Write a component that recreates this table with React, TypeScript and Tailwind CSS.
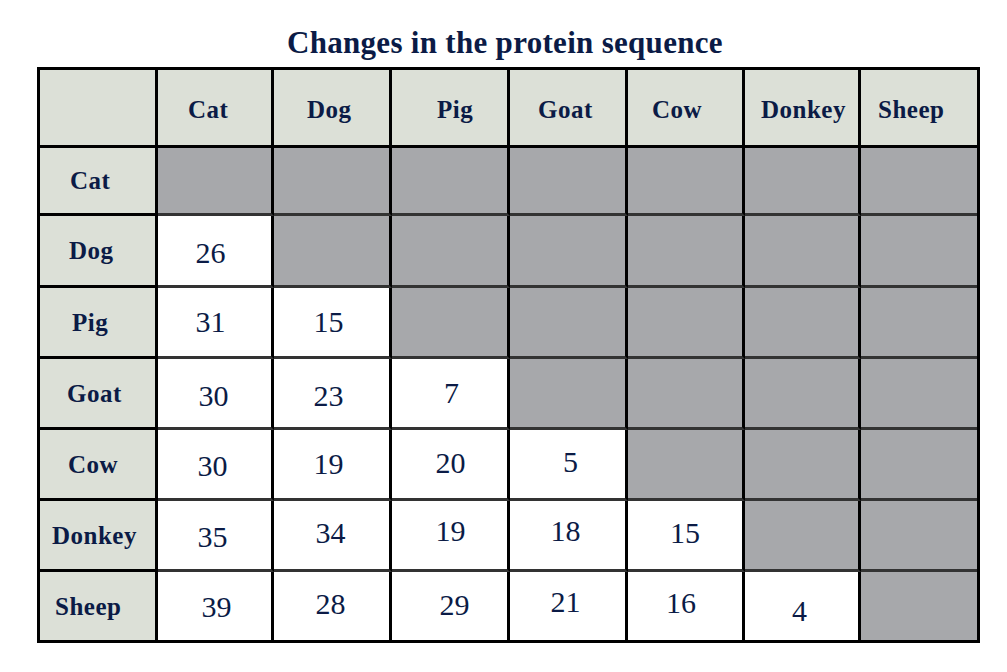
import React from "react";

const serif = { fontFamily: '"Liberation Serif", "Times New Roman", serif' };

const headers: { name: string; pl: string }[] = [
  { name: "Cat", pl: "pl-[30px]" },
  { name: "Dog", pl: "pl-[33px]" },
  { name: "Pig", pl: "pl-[45px]" },
  { name: "Goat", pl: "pl-[28px]" },
  { name: "Cow", pl: "pl-[24px]" },
  { name: "Donkey", pl: "pl-[16px]" },
  { name: "Sheep", pl: "pl-[17px]" },
];

type Cell = { v: string; t: string } | null;

const rows: { name: string; pl: string; h: string; cells: Cell[] }[] = [
  { name: "Cat", pl: "pl-[30px]", h: "h-[68px]", cells: [] },
  {
    name: "Dog",
    pl: "pl-[29px]",
    h: "h-[72px]",
    cells: [{ v: "26", t: "translate-x-[-4px] translate-y-[2px]" }],
  },
  {
    name: "Pig",
    pl: "pl-[32px]",
    h: "h-[71px]",
    cells: [
      { v: "31", t: "translate-x-[-4px] translate-y-[0px]" },
      { v: "15", t: "translate-x-[-3px] translate-y-[0px]" },
    ],
  },
  {
    name: "Goat",
    pl: "pl-[27px]",
    h: "h-[71px]",
    cells: [
      { v: "30", t: "translate-x-[-1px] translate-y-[3px]" },
      { v: "23", t: "translate-x-[-3px] translate-y-[3px]" },
      { v: "7", t: "translate-x-[2px] translate-y-[0px]" },
    ],
  },
  {
    name: "Cow",
    pl: "pl-[28px]",
    h: "h-[71px]",
    cells: [
      { v: "30", t: "translate-x-[-2px] translate-y-[2px]" },
      { v: "19", t: "translate-x-[-3px] translate-y-[0px]" },
      { v: "20", t: "translate-x-[1px] translate-y-[-1px]" },
      { v: "5", t: "translate-x-[3px] translate-y-[-2px]" },
    ],
  },
  {
    name: "Donkey",
    pl: "pl-[12px]",
    h: "h-[71px]",
    cells: [
      { v: "35", t: "translate-x-[-2px] translate-y-[2px]" },
      { v: "34", t: "translate-x-[-1px] translate-y-[-2px]" },
      { v: "19", t: "translate-x-[1px] translate-y-[-4px]" },
      { v: "18", t: "translate-x-[-2px] translate-y-[-4px]" },
      { v: "15", t: "translate-x-[0px] translate-y-[-2px]" },
    ],
  },
  {
    name: "Sheep",
    pl: "pl-[15px]",
    h: "h-[68px]",
    cells: [
      { v: "39", t: "translate-x-[2px] translate-y-[1px]" },
      { v: "28", t: "translate-x-[-1px] translate-y-[-2px]" },
      { v: "29", t: "translate-x-[5px] translate-y-[-1px]" },
      { v: "21", t: "translate-x-[-2px] translate-y-[-4px]" },
      { v: "16", t: "translate-x-[-4px] translate-y-[-3px]" },
      { v: "4", t: "translate-x-[-2px] translate-y-[5px]" },
    ],
  },
];

const colW = [
  "w-[118px]",
  "w-[116px]",
  "w-[118px]",
  "w-[118px]",
  "w-[118px]",
  "w-[117px]",
  "w-[116px]",
  "w-[116px]",
];

export default function App() {
  return (
    <div className="w-[1007px] h-[672px] bg-white text-[#0b1b46]" style={serif}>
      <div className="pt-[27px] pl-[287px] text-[31px] leading-[31px] font-bold tracking-[0.3px] whitespace-nowrap">
        Changes in the protein sequence
      </div>
      <div className="mt-[9px] ml-[37px] w-[943px] border-[3px] border-black flex flex-col">
        <div className="flex h-[78px]">
          <div className={`${colW[0]} h-full bg-[#dce0d7] border-r-[3px] border-b-[3px] border-black`} />
          {headers.map((h, i) => (
            <div
              key={h.name}
              className={`${colW[i + 1]} h-full bg-[#dce0d7] border-b-[3px] border-black flex items-center ${
                i < 6 ? "border-r-[3px]" : ""
              } ${h.pl}`}
            >
              <span className="text-[25px] leading-none font-bold tracking-[0.5px] translate-y-[2px]">{h.name}</span>
            </div>
          ))}
        </div>
        {rows.map((r, ri) => (
          <div key={r.name} className={`flex ${r.h}`}>
            <div
              className={`${colW[0]} h-full bg-[#dce0d7] border-r-[3px] border-black flex items-center ${r.pl} ${
                ri < 6 ? "border-b-[3px]" : ""
              }`}
            >
              <span className="text-[25px] leading-none font-bold tracking-[0.5px]">{r.name}</span>
            </div>
            {headers.map((_, ci) => {
              const cell = ci < r.cells.length ? r.cells[ci] : null;
              return (
                <div
                  key={ci}
                  className={`${colW[ci + 1]} h-full flex items-center justify-center ${
                    cell ? "bg-white" : "bg-[#a7a8ab]"
                  } ${ci < 6 ? "border-r-[3px] border-r-black" : ""} ${
                    ri < 6 ? "border-b-[3px] border-b-[#333333]" : ""
                  }`}
                >
                  {cell && (
                    <span className={`text-[30px] leading-none ${cell.t}`}>{cell.v}</span>
                  )}
                </div>
              );
            })}
          </div>
        ))}
      </div>
    </div>
  );
}
